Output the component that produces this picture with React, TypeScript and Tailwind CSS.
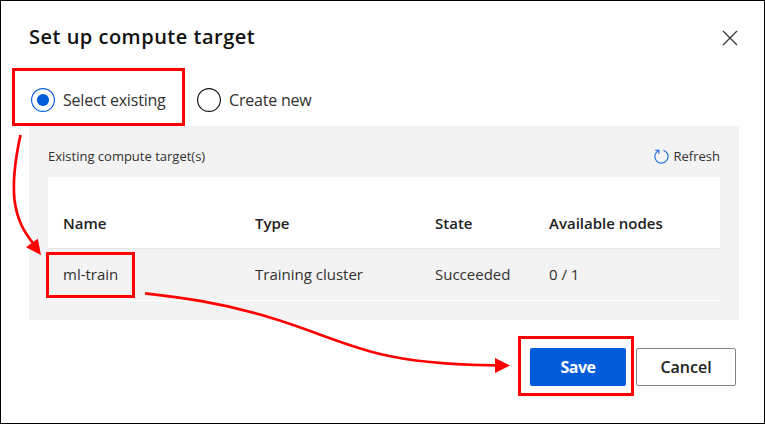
import React from 'react';

type Row = { name: string; type: string; state: string; nodes: string };

const rows: Row[] = [{ name: 'ml-train', type: 'Training cluster', state: 'Succeeded', nodes: '0 / 1' }];

function Radio({ checked }: { checked?: boolean }) {
  return (
    <svg className="size-6 shrink-0" viewBox="0 0 24 24" fill="none">
      <circle cx="12" cy="12" r="11.4" stroke={checked ? '#015cda' : '#111111'} strokeWidth="1.15" />
      {checked && <circle cx="12" cy="12" r="6.1" fill="#015cda" />}
    </svg>
  );
}

function Annotations() {
  return (
    <>
      <div className="absolute left-[12px] top-[68px] h-[58px] w-[173px] border-3 border-[#ff0000]" />
      <div className="absolute left-[46px] top-[252px] h-[46px] w-[89px] border-3 border-[#ff0000]" />
      <div className="absolute left-[518px] top-[336px] h-[60px] w-[116px] border-3 border-[#ff0000]" />
      <svg className="absolute left-0 top-0 h-[424px] w-[765px]" viewBox="0 0 765 424" fill="none">
        <path d="M20.5 135C15 160 12.500 181 14.500 200C17 219 23 231 34 244.500" stroke="#ff0000" strokeWidth="2.7" />
        <path d="M41 255L26 247.300L37.800 238.700Z" fill="#ff0000" />
        <path d="M145 293.300C186 298 220 303 260 314.500C308 328 335 342.500 378 353.500C410 361.500 455 365 496 365.300" stroke="#ff0000" strokeWidth="2.7" />
        <path d="M510 365.500L495 373V358Z" fill="#ff0000" />
      </svg>
    </>
  );
}

export default function App() {
  return (
    <div className="relative flex h-[424px] w-[765px] flex-col border border-black bg-white font-['Open_Sans','Noto_Sans',sans-serif] text-[#323130]">
      <header className="flex items-start justify-between pl-7 pr-[26px] pt-[22px]">
        <h1 className="text-[20px] leading-7 font-semibold tracking-[0.5px] text-[#111111]">Set up compute target</h1>
        <button aria-label="Close" className="mt-[7px]">
          <svg className="size-4" viewBox="0 0 16 16" fill="none" stroke="#333333" strokeWidth="1.2">
            <path d="M1 1L15 15M15 1L1 15" />
          </svg>
        </button>
      </header>

      <div className="mt-[37px] flex h-6 items-center pl-[30px] text-[16px]">
        <label className="flex w-[166px] items-center gap-2">
          <Radio checked />
          <span className="whitespace-nowrap tracking-[-0.2px]">Select existing</span>
        </label>
        <label className="flex items-center gap-2">
          <Radio />
          <span className="whitespace-nowrap tracking-[-0.2px]">Create new</span>
        </label>
      </div>

      <section className="mx-7 mr-[25px] mt-[14px] h-[194px] bg-[#f3f3f3] px-[19px]">
        <div className="flex h-[51px] items-center justify-between pt-2.5 text-[13px]">
          <span>Existing compute target(s)</span>
          <button className="flex items-center gap-[5px]">
            <svg className="size-[15px]" viewBox="0 0 15 15" fill="none" stroke="#1769dd" strokeWidth="1.1">
              <path d="M9.500 1.200A6.600 6.600 0 1 1 4.300 1.700M1.200 1.200H4.900V4.700" />
            </svg>
            <span>Refresh</span>
          </button>
        </div>
        <div className="grid h-[72px] grid-cols-[192px_180px_114px_1fr] items-end border-b border-[#e6e6e6] bg-white pb-[13px] pl-[15px] text-[15px] leading-6 font-semibold text-[#222222]">
          <span>Name</span>
          <span>Type</span>
          <span>State</span>
          <span>Available nodes</span>
        </div>
        {rows.map((r) => (
          <div key={r.name} className="grid h-[52px] grid-cols-[192px_180px_114px_1fr] items-center border-b border-white pl-[15px] text-[15px]">
            <span>{r.name}</span>
            <span>{r.type}</span>
            <span>{r.state}</span>
            <span>{r.nodes}</span>
          </div>
        ))}
      </section>

      <footer className="mt-7 flex justify-end gap-2.5 pr-7 text-[16px]">
        <button className="h-[38px] w-24 rounded-[2px] bg-[#015cda] font-bold tracking-[-0.5px] text-white">Save</button>
        <button className="h-[38px] w-[100px] rounded-[2px] border border-[#858585] font-semibold text-[#222222]">Cancel</button>
      </footer>
      <div className="absolute -left-px -top-px">
        <Annotations />
      </div>
    </div>
  );
}
